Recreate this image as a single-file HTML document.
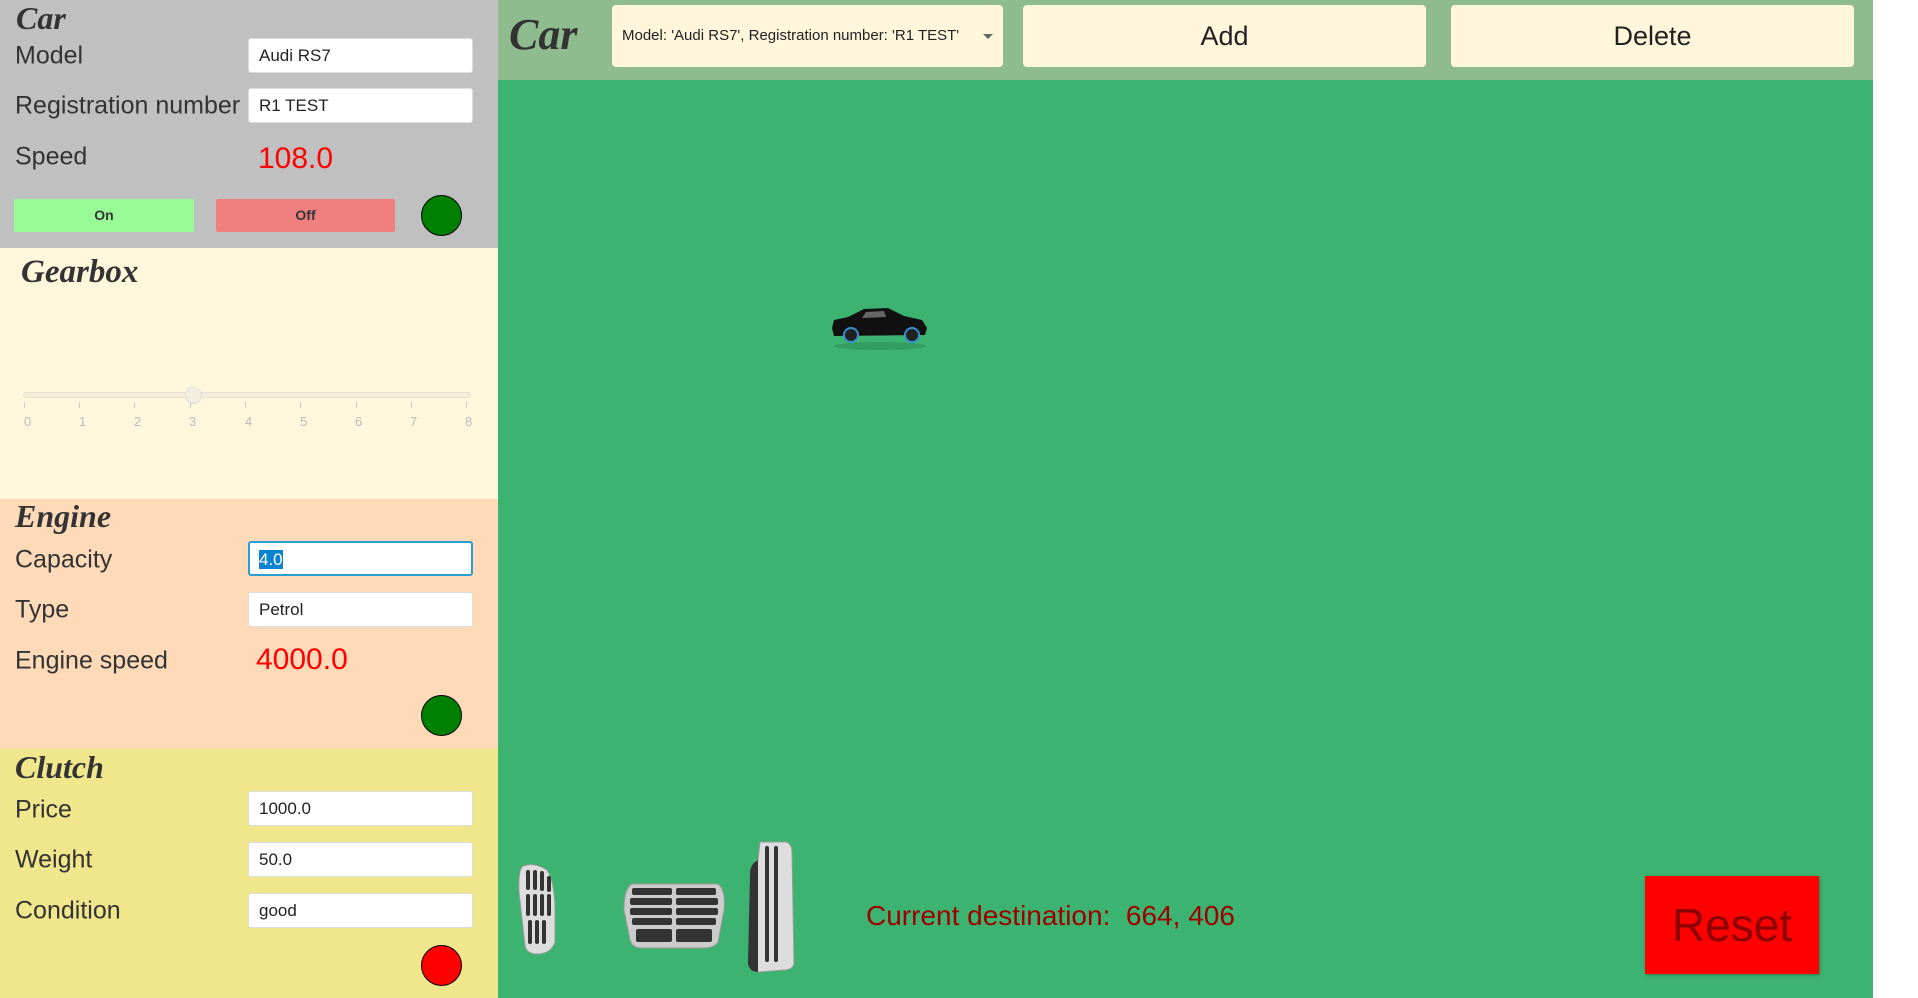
<!DOCTYPE html>
<html><head><meta charset="utf-8"><style>
*{box-sizing:border-box;margin:0;padding:0}
body{width:1918px;height:998px;position:relative;overflow:hidden;background:#fff;font-family:"Liberation Sans",sans-serif;color:#333}
.abs{position:absolute}
.sec{position:absolute;left:0;width:498px}
.title{position:absolute;font-family:"Liberation Serif",serif;font-weight:bold;font-style:italic;color:#333}
.lbl{position:absolute;left:15px;font-size:25px;color:#333;transform:translateY(-50%)}
.inp{position:absolute;left:248px;width:225px;height:35px;background:#fff;border:1px solid #ddd;border-radius:3px;font-size:17px;padding-left:10px;line-height:33px;color:#222}
.val{position:absolute;color:#f00;font-size:30px;transform:translateY(-50%)}
.dot{position:absolute;width:41px;height:41px;border-radius:50%;border:1.5px solid #000}
.btn{position:absolute;background:#fff6dc;border-radius:4px;text-align:center;font-size:27px;color:#222}
</style></head><body>
<div class="sec" style="top:0;height:248px;background:#c0c0c0"></div>
<div class="sec" style="top:248px;height:251px;background:#fff7dc"></div>
<div class="sec" style="top:499px;height:250px;background:#ffdab9"></div>
<div class="sec" style="top:749px;height:249px;background:#f0e68c"></div>

<div class="title" style="left:16px;top:0;font-size:32px">Car</div>
<div class="lbl" style="top:56px">Model</div>
<div class="inp" style="top:38px">Audi RS7</div>
<div class="lbl" style="top:106px">Registration number</div>
<div class="inp" style="top:88px">R1 TEST</div>
<div class="lbl" style="top:157px">Speed</div>
<div class="val" style="left:258px;top:159px">108.0</div>
<div class="abs" style="left:14px;top:199px;width:180px;height:33px;background:#98fb98;border-radius:2px;font-weight:bold;font-size:14px;text-align:center;line-height:33px">On</div>
<div class="abs" style="left:216px;top:199px;width:179px;height:33px;background:#f08080;border-radius:2px;font-weight:bold;font-size:14px;text-align:center;line-height:33px">Off</div>
<div class="dot" style="left:421px;top:195px;background:#008000"></div>

<div class="title" style="left:21px;top:254px;font-size:33px">Gearbox</div>
<div class="abs" style="left:23px;top:392px;width:448px;height:6px;background:#f2ecd8;border:1px solid #e6e0cc;border-radius:3px"></div>
<div class="abs" style="left:185px;top:387px;width:17px;height:17px;border-radius:50%;background:#f3eedd;border:1px solid #ddd"></div>
<div class="abs" style="left:0;top:402px;width:498px;height:30px;font-size:13px;color:#bbb">
<span class="abs" style="left:24px;top:0;width:1px;height:6px;background:#ccc"></span>
<span class="abs" style="left:79px;top:0;width:1px;height:6px;background:#ccc"></span>
<span class="abs" style="left:134px;top:0;width:1px;height:6px;background:#ccc"></span>
<span class="abs" style="left:190px;top:0;width:1px;height:6px;background:#ccc"></span>
<span class="abs" style="left:245px;top:0;width:1px;height:6px;background:#ccc"></span>
<span class="abs" style="left:300px;top:0;width:1px;height:6px;background:#ccc"></span>
<span class="abs" style="left:356px;top:0;width:1px;height:6px;background:#ccc"></span>
<span class="abs" style="left:411px;top:0;width:1px;height:6px;background:#ccc"></span>
<span class="abs" style="left:466px;top:0;width:1px;height:6px;background:#ccc"></span>
<span class="abs" style="left:24px;top:12px">0</span><span class="abs" style="left:79px;top:12px">1</span><span class="abs" style="left:134px;top:12px">2</span><span class="abs" style="left:189px;top:12px">3</span><span class="abs" style="left:245px;top:12px">4</span><span class="abs" style="left:300px;top:12px">5</span><span class="abs" style="left:355px;top:12px">6</span><span class="abs" style="left:410px;top:12px">7</span><span class="abs" style="left:465px;top:12px">8</span>
</div>

<div class="title" style="left:15px;top:498px;font-size:32px">Engine</div>
<div class="lbl" style="top:560px">Capacity</div>
<div class="inp" style="top:541px;border:2px solid #2a9fd6;padding-left:9px"><span style="background:#0a84d0;color:#fff">4.0</span></div>
<div class="lbl" style="top:610px">Type</div>
<div class="inp" style="top:592px">Petrol</div>
<div class="lbl" style="top:661px">Engine speed</div>
<div class="val" style="left:256px;top:660px">4000.0</div>
<div class="dot" style="left:421px;top:695px;background:#008000"></div>

<div class="title" style="left:15px;top:749px;font-size:32px">Clutch</div>
<div class="lbl" style="top:810px">Price</div>
<div class="inp" style="top:791px">1000.0</div>
<div class="lbl" style="top:860px">Weight</div>
<div class="inp" style="top:842px">50.0</div>
<div class="lbl" style="top:911px">Condition</div>
<div class="inp" style="top:893px">good</div>
<div class="dot" style="left:421px;top:945px;background:#f00"></div>

<div class="abs" style="left:498px;top:0;width:1375px;height:998px;background:#3cb371"></div>
<div class="abs" style="left:498px;top:0;width:1375px;height:80px;background:#8fbc8f"></div>
<div class="title" style="left:509px;top:9px;font-size:44px">Car</div>
<div class="btn" style="left:612px;top:5px;width:391px;height:62px;font-size:15px;text-align:left;padding-left:10px;line-height:62px">Model: 'Audi RS7', Registration number: 'R1 TEST'<span class="abs" style="right:10px;top:29px;width:0;height:0;border-left:5px solid transparent;border-right:5px solid transparent;border-top:5px solid #666"></span></div>
<div class="btn" style="left:1023px;top:5px;width:403px;height:62px;line-height:62px">Add</div>
<div class="btn" style="left:1451px;top:5px;width:403px;height:62px;line-height:62px">Delete</div>

<svg class="abs" style="left:826px;top:300px" width="110" height="55" viewBox="0 0 110 55">
<ellipse cx="54" cy="46" rx="46" ry="4" fill="#2e8f57" opacity=".6"/>
<path d="M6 28 L8 20 L22 17 L38 9 L62 8 L78 16 L96 20 L101 28 L99 35 L8 36 Z" fill="#111"/>
<path d="M40 12 L58 11 L60 17 L36 18 Z" fill="#666"/>
<circle cx="25" cy="35" r="7" fill="#222" stroke="#3a8fd0" stroke-width="2"/>
<circle cx="86" cy="35" r="7" fill="#222" stroke="#3a8fd0" stroke-width="2"/>
</svg>

<svg class="abs" style="left:515px;top:862px" width="60" height="96" viewBox="0 0 60 96">
<path d="M8 4 Q20 0 32 8 Q40 20 40 50 L40 80 Q36 92 22 92 Q12 92 10 84 L4 30 Q3 8 8 4Z" fill="#ddd" stroke="#999"/>
<g fill="#333"><rect x="11" y="8" width="4" height="20" rx="2"/><rect x="18" y="8" width="4" height="20" rx="2"/><rect x="25" y="9" width="4" height="20" rx="2"/><rect x="32" y="14" width="4" height="16" rx="2"/>
<rect x="11" y="32" width="4" height="22" rx="2"/><rect x="18" y="32" width="4" height="22" rx="2"/><rect x="25" y="32" width="4" height="22" rx="2"/><rect x="32" y="32" width="4" height="22" rx="2"/>
<rect x="13" y="58" width="4" height="24" rx="2"/><rect x="20" y="58" width="4" height="24" rx="2"/><rect x="27" y="58" width="4" height="24" rx="2"/></g>
</svg>
<svg class="abs" style="left:622px;top:880px" width="106" height="72" viewBox="0 0 106 72">
<path d="M10 4 L96 4 Q104 10 102 30 L96 62 Q92 68 82 68 L20 68 Q10 68 8 60 L2 30 Q2 8 10 4Z" fill="#ccc" stroke="#999"/>
<g fill="#333"><rect x="10" y="8" width="40" height="7" rx="2"/><rect x="54" y="8" width="40" height="7" rx="2"/><rect x="8" y="18" width="42" height="7" rx="2"/><rect x="54" y="18" width="42" height="7" rx="2"/><rect x="8" y="28" width="42" height="7" rx="2"/><rect x="54" y="28" width="42" height="7" rx="2"/><rect x="10" y="38" width="40" height="7" rx="2"/><rect x="54" y="38" width="40" height="7" rx="2"/><rect x="14" y="49" width="36" height="13" rx="2"/><rect x="54" y="49" width="36" height="13" rx="2"/></g>
</svg>
<svg class="abs" style="left:746px;top:838px" width="56" height="138" viewBox="0 0 56 138">
<path d="M14 4 L40 4 Q46 6 46 14 L48 126 Q46 132 38 132 L12 134 Q4 134 4 124 L6 30 Q8 24 12 22 Z" fill="#ddd" stroke="#999"/>
<path d="M12 22 Q4 26 4 36 L2 126 Q4 134 12 134 L12 22Z" fill="#333"/>
<rect x="19" y="8" width="4" height="116" rx="2" fill="#333"/><rect x="28" y="8" width="4" height="116" rx="2" fill="#333"/>
</svg>

<div class="abs" style="left:866px;top:900px;font-size:28px;color:#9e0000">Current destination:&nbsp; 664, 406</div>
<div class="abs" style="left:1645px;top:876px;width:174px;height:98px;background:#f00;color:#8b0000;font-size:46px;text-align:center;line-height:98px;box-shadow:1px 1px 3px rgba(0,0,0,.3)">Reset</div>
</body></html>
